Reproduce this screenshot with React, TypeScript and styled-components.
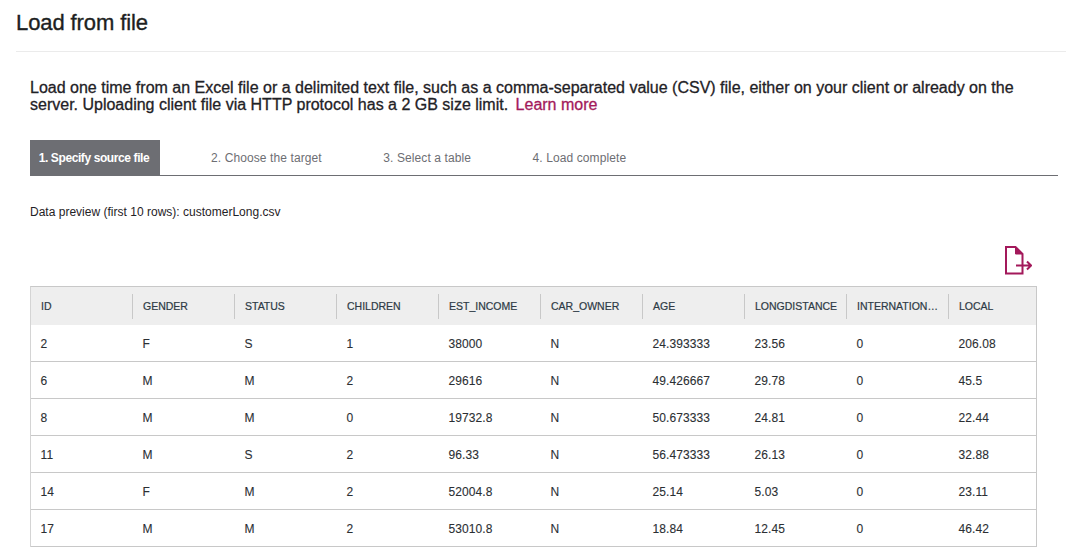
import styled, { createGlobalStyle } from "styled-components";

const GlobalStyle = createGlobalStyle`
  html, body {
    margin: 0;
    padding: 0;
    background: #fff;
    overflow: hidden;
  }
  body {
    font-family: "Liberation Sans", Arial, sans-serif;
    color: #1f2226;
  }
`;

const Page = styled.div`
  width: 1066px;
  height: 547px;
  overflow: hidden;
`;

const Header = styled.header`
  margin-left: 16px;
  height: 51px;
  border-bottom: 1px solid #ebebeb;
`;

const Title = styled.h1`
  margin: 0;
  padding-top: 9px;
  font-size: 22px;
  line-height: 28px;
  font-weight: 400;
  letter-spacing: -0.1px;
  color: #1d1f22;
  -webkit-text-stroke: 0.35px #1d1f22;
`;

const Content = styled.main`
  padding: 27px 8px 0 30px;
`;

const Intro = styled.p`
  margin: 0;
  width: 1010px;
  font-size: 16px;
  line-height: 17px;
  color: #1f2226;
  -webkit-text-stroke: 0.3px #1f2226;
`;

const LearnMore = styled.a`
  margin-left: 3px;
  color: #a3195b;
  -webkit-text-stroke: 0.3px #a3195b;
  text-decoration: none;
`;

const Tabs = styled.nav`
  display: flex;
  height: 35px;
  margin-top: 27px;
  border-bottom: 1px solid #6d6e73;
`;

const Tab = styled.div<{ $active?: boolean }>`
  display: flex;
  align-items: center;
  justify-content: center;
  box-sizing: border-box;
  width: ${(p) => (p.$active ? "130px" : "auto")};
  padding-right: ${(p) => (p.$active ? "2px" : "0")};
  margin-right: ${(p) => (p.$active ? "51px" : "61.5px")};
  background: ${(p) => (p.$active ? "#6d6e73" : "transparent")};
  color: ${(p) => (p.$active ? "#fff" : "#6d6e73")};
  font-size: 12px;
  font-weight: ${(p) => (p.$active ? 700 : 400)};
  letter-spacing: ${(p) => (p.$active ? "-0.4px" : "0.1px")};
`;

const PreviewLabel = styled.div`
  margin-top: 29px;
  font-size: 12px;
  line-height: 14px;
  letter-spacing: 0.01px;
  color: #1f2226;
`;

const ExportRow = styled.div`
  display: flex;
  justify-content: flex-end;
  margin-top: 27px;
  padding-right: 26px;
  height: 40px;
`;

const ExportIcon = styled.svg`
  display: block;
  width: 28px;
  height: 29px;
`;

const TableWrap = styled.div`
  width: 1007px;
  box-sizing: border-box;
  border-top: 1px solid #c8c8c8;
  border-left: 1px solid #d4d4d4;
  border-right: 1px solid #c8c8c8;
`;

const Grid = styled.div`
  display: grid;
  grid-template-columns: repeat(9, 102px) 1fr;
`;

const HeadRow = styled(Grid)`
  height: 38px;
  align-items: center;
  background: #eeeeee;
`;

const HeadCell = styled.div<{ $first?: boolean }>`
  height: 25px;
  line-height: 25px;
  padding-left: 10px;
  border-left: ${(p) => (p.$first ? "0" : "1px solid #c8c8c8")};
  margin-left: ${(p) => (p.$first ? "0" : "-1px")};
  font-size: 10.5px;
  color: #2d3a45;
  -webkit-text-stroke: 0.2px #2d3a45;
  white-space: nowrap;
  overflow: hidden;
`;

const Row = styled(Grid)`
  height: 37px;
  box-sizing: border-box;
  padding-top: 1px;
  align-items: center;
  border-bottom: 1px solid #c8c8c8;
`;

const Cell = styled.div`
  padding-left: 9.5px;
  font-size: 12px;
  letter-spacing: 0.1px;
  color: #2b2f33;
  -webkit-text-stroke: 0.1px #2b2f33;
`;

const columns = [
  "ID",
  "GENDER",
  "STATUS",
  "CHILDREN",
  "EST_INCOME",
  "CAR_OWNER",
  "AGE",
  "LONGDISTANCE",
  "INTERNATION…",
  "LOCAL",
];

const rows = [
  ["2", "F", "S", "1", "38000", "N", "24.393333", "23.56", "0", "206.08"],
  ["6", "M", "M", "2", "29616", "N", "49.426667", "29.78", "0", "45.5"],
  ["8", "M", "M", "0", "19732.8", "N", "50.673333", "24.81", "0", "22.44"],
  ["11", "M", "S", "2", "96.33", "N", "56.473333", "26.13", "0", "32.88"],
  ["14", "F", "M", "2", "52004.8", "N", "25.14", "5.03", "0", "23.11"],
  ["17", "M", "M", "2", "53010.8", "N", "18.84", "12.45", "0", "46.42"],
];

const App = () => {
  return (
    <Page>
      <GlobalStyle />
      <Header>
        <Title>Load from file</Title>
      </Header>
      <Content>
        <Intro>
          Load one time from an Excel file or a delimited text file, such as a
          comma-separated value (CSV) file, either on your client or already on
          the server. Uploading client file via HTTP protocol has a 2 GB size
          limit. <LearnMore>Learn more</LearnMore>
        </Intro>
        <Tabs>
          <Tab $active>1. Specify source file</Tab>
          <Tab>2. Choose the target</Tab>
          <Tab>3. Select a table</Tab>
          <Tab>4. Load complete</Tab>
        </Tabs>
        <PreviewLabel>Data preview (first 10 rows): customerLong.csv</PreviewLabel>
        <ExportRow>
          <ExportIcon viewBox="0 0 28 29" fill="none" stroke="#a3195b" strokeWidth="2">
            <path d="M2 1h9.5l7 7v19.5H2z" />
            <path d="M11.5 1.5l6.5 6.5h-6.5z" fill="#a3195b" strokeWidth="1" />
            <path d="M12 19.5h15M23 15.5l4 4-4 4" />
          </ExportIcon>
        </ExportRow>
        <TableWrap>
          <HeadRow>
            {columns.map((c, i) => (
              <HeadCell key={c} $first={i === 0}>
                {c}
              </HeadCell>
            ))}
          </HeadRow>
          {rows.map((r) => (
            <Row key={r[0]}>
              {r.map((v, i) => (
                <Cell key={i}>{v}</Cell>
              ))}
            </Row>
          ))}
        </TableWrap>
      </Content>
    </Page>
  );
};

export default App;
